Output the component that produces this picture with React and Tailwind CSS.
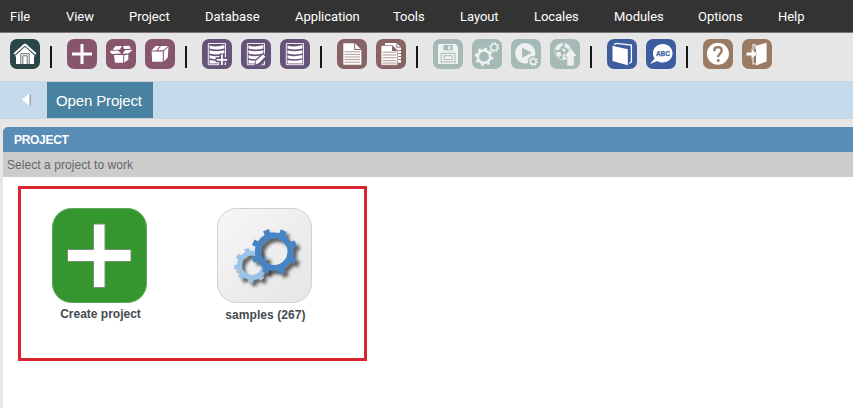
import React from "react";

const menus = [
  ["File", "w-[56px]"],
  ["View", "w-[63px]"],
  ["Project", "w-[76px]"],
  ["Database", "w-[90px]"],
  ["Application", "w-[98px]"],
  ["Tools", "w-[67px]"],
  ["Layout", "w-[74px]"],
  ["Locales", "w-[80px]"],
  ["Modules", "w-[84px]"],
  ["Options", "w-[80px]"],
  ["Help", "w-[60px]"],
];

// Closed gear outline with flat teeth, plus a circular hole (even-odd fill).
function gear(cx, cy, body, tip, hole, teeth, offset = 0, wide = 0.25, narrow = 0.19) {
  const step = (Math.PI * 2) / teeth;
  const at = (r, a) => `${(cx + r * Math.cos(a)).toFixed(2)} ${(cy + r * Math.sin(a)).toFixed(2)}`;
  let d = "";
  for (let i = 0; i < teeth; i++) {
    const a = i * step + offset;
    d += `${i ? `A${body} ${body} 0 0 1 ` : "M"}${at(body, a - step * wide)}`;
    d += `L${at(tip, a - step * narrow)}L${at(tip, a + step * narrow)}L${at(body, a + step * wide)}`;
  }
  d += `A${body} ${body} 0 0 1 ${at(body, -step * wide + offset)}Z`;
  d += `M${cx - hole} ${cy}a${hole} ${hole} 0 1 0 ${hole * 2} 0a${hole} ${hole} 0 1 0 ${-hole * 2} 0Z`;
  return d;
}

const Home = () => (
  <>
    <path d="M15 7.3 25.6 17.2H24V25H6V17.2H4.4Z" fill="#fff" />
    <path d="M15 5.2 25.8 15M15 5.2 4.2 15" stroke="#fff" strokeWidth="2" />
    <path d="M4.8 16.6 15 7.5 25.2 16.6" stroke="#2c4747" strokeWidth="0.8" fill="none" />
    <path d="M10.8 25V14.7H19.2V25M12.8 25V16.8H17.2V25" stroke="#526969" strokeWidth="0.9" fill="none" />
  </>
);

const Plus = () => <path d="M13.5 5h3v8.5H25v3h-8.5V25h-3v-8.5H5v-3h8.5Z" fill="#fff" />;

const OpenBox = () => (
  <g fill="#fff">
    <path d="M9.2 7.2 16 7 13.8 10.6 6.6 11Z" />
    <path d="M17 7 23.4 6.8 24.8 9.8 18 10Z" />
    <path d="M3.6 12 12 11.6 15.2 14.5 5.8 15Z" />
    <path d="M19 11.2 26.8 10.8 22.2 14.6 16.5 14.7Z" />
    <path d="M8 16H17.2V23.8H9Z" />
    <path d="M18.2 16.2 22.3 15.6V20.8L18.2 23.6Z" />
  </g>
);

const ClosedBox = () => (
  <g fill="#fff">
    <path d="M6.5 11.6 10.7 7H14.8L11.3 11.4Z" />
    <path d="M12.7 11.3 16.1 7H23L18.5 11.2Z" />
    <path d="M6.6 12.6H17.8V22.8H7.2Z" />
    <path d="M18.9 12.2 23.5 7.7 22.7 18.4 18.9 22.4Z" />
  </g>
);

const Sheet = () => (
  <>
    <path d="M6.3 4.5H23.5V25.7H6.3Z" fill="#66537a" stroke="#fff" strokeWidth="0.9" />
    <path d="M7.5 6.4Q14 8.6 22.4 6V9.6Q14 11.5 7.5 9.4ZM7.5 11.3Q14 13.3 22.4 11.2V14.6Q14 16.4 7.5 14.4ZM7.5 16.2Q14 18.2 22.4 16V19.3Q14 21.2 7.5 19.2ZM7.5 21Q14 22.8 22.4 20.6V24.5H7.5Z" fill="#fff" />
  </>
);

const SheetAdd = () => (
  <>
    <Sheet />
    <path d="M19.9 14.5V27M13.6 20.8H26" stroke="#66537a" strokeWidth="5" />
    <path d="M19.9 15.5V26M14.7 20.8H25.2" stroke="#fff" strokeWidth="1.8" />
  </>
);

const SheetEdit = () => (
  <>
    <Sheet />
    <path d="M13 27 15 20 22 13.8 27 18 20 26Z" fill="#66537a" />
    <path d="M14.4 25.5 15.3 21.5 22 15.6 24.4 17.5 18 24.1Z" fill="#fff" />
  </>
);

const Page = () => (
  <>
    <path d="M6.3 4.2H17.2V11H24.4V25.8H6.3Z" fill="#fff" />
    <path d="M18.2 4.6V10H23.8Z" fill="#fff" />
    <path d="M7.5 12.8H23M7.5 15.4H23M7.5 18H23M7.5 20.6H23M7.5 23.2H23" stroke="#a98b8c" strokeWidth="0.9" />
  </>
);

const Pages = () => (
  <>
    <path d="M9 4H20.5L25 8.2V23.8H9Z" fill="#fff" />
    <path d="M20.8 4.2V8.2H25" fill="none" stroke="#886365" strokeWidth="0.9" />
    <path d="M22.5 11.5H25M22.5 14.5H25M22.5 17.5H25M22.5 20.5H25" stroke="#886365" strokeWidth="0.9" />
    <path d="M5 6.5H16.8L21.7 11.4V26.2H5Z" fill="#fff" stroke="#886365" strokeWidth="0.7" />
    <path d="M16 6.5V12H21.7Z" fill="#886365" />
    <path d="M6.5 13.2H20.5M6.5 16H20.5M6.5 18.8H20.5M6.5 21.6H20.5M6.5 24H20.5" stroke="#a98b8c" strokeWidth="0.9" />
  </>
);

const Save = () => (
  <>
    <path d="M6 5H22.5L25 7.5V25H5V6Z" fill="#edf2f1" />
    <path d="M8.2 24.3V14.3H22V24.3M9 22.8H21.4" fill="none" stroke="#a5b9b6" strokeWidth="1" />
    <path d="M10.5 6H19.5V11.3H10.5Z" fill="#a5b9b6" />
    <path d="M15.2 7H17.4V10.4H15.2Z" fill="#edf2f1" />
    <path d="M11.2 16.7H19.2V20.5H11.2Z" fill="#edf2f1" stroke="#a5b9b6" strokeWidth="0.9" />
  </>
);

const Gears = () => (
  <g fill="#edf2f1" fillRule="evenodd">
    <path d={gear(12, 17.7, 7.4, 9.3, 4.9, 8, 0.2)} />
    <path d={gear(22.2, 8.3, 3.9, 5.2, 2.5, 8, 0.2)} />
  </g>
);

const Play = () => (
  <>
    <circle cx="14.2" cy="14.2" r="10.2" fill="#edf2f1" />
    <path d="M11.2 8.7 20.7 13.7 11.2 18.8Z" fill="#a5b9b6" />
    <circle cx="22.3" cy="22.5" r="5.5" fill="#a5b9b6" />
    <path d={gear(22.3, 22.5, 3.5, 4.7, 2.1, 8, 0.2)} fill="#edf2f1" fillRule="evenodd" />
  </>
);

const Publish = () => (
  <>
    <circle cx="13" cy="12.4" r="8.5" fill="#a5b9b6" stroke="#d9e3e1" strokeWidth="0.8" />
    <path d="M8 5.7 12 4.3 13.3 6.6 10.7 7.6 10.3 10 7.1 11.4 5 10.1ZM15.4 4.6 19 6.4 21.2 10.4 18.4 10.9 16.2 8.6 14 8.2ZM6.6 12.7 10.6 13.3 11.5 16.2 9.3 18.2 6.2 16.4ZM12.5 9.2 15.6 10.4 15.4 13.1 12.3 11.8ZM13 15.4 16.5 14.4V20.4L12.4 20.2Z" fill="#edf2f1" />
    <path d="M20.7 8.5 27.1 17.6H24.2V27H16.8V17.6H14.2Z" fill="#edf2f1" stroke="#a5b9b6" strokeWidth="0.8" />
  </>
);

const Book = () => (
  <>
    <path d="M5.5 6.7 20.8 10.3V26.3L5.5 22Z" fill="#fff" />
    <path d="M7 5.4 9.4 4.3 24.4 6V23L22.2 24.4" stroke="#fff" strokeWidth="1.3" fill="none" />
    <path d="M8.5 6.5 22.1 8.7V24" stroke="#3e5ca0" strokeWidth="1.1" fill="none" />
  </>
);

const Speech = () => (
  <>
    <path d="M16.8 5C22.3 5 26.5 9 26.5 14.2S22.3 23.5 16.8 23.5C14.7 23.5 13 23.1 11.3 22L4 25 8.6 19.5C7.4 18 7 16.2 7 14.2 7 9 11.2 5 16.8 5Z" fill="#fff" />
    <text x="16.9" y="17.2" textAnchor="middle" fill="#3e5ca0" fontFamily="Liberation Sans, Arial, sans-serif" fontWeight="700" fontSize="7" textLength="14" lengthAdjust="spacingAndGlyphs" stroke="#3e5ca0" strokeWidth="0.25">ABC</text>
  </>
);

const Question = () => (
  <>
    <circle cx="14.9" cy="14.8" r="11" fill="#fff" />
    <path d="M11.3 12.2V11.4C11.3 9.3 13 8.2 15 8.2S18.7 9.4 18.7 11.5C18.7 14.6 15.2 14.5 15.2 17.7V18.3" stroke="#9b7a63" strokeWidth="2.3" fill="none" />
    <path d="M13.9 20.2h2.6v2.7h-2.6Z" fill="#9b7a63" />
  </>
);

const Exit = () => (
  <>
    <path d="M10.2 5.1H14V10H12.6V7.5H11.8V24H14V25.4H10.2Z" fill="#dacbc1" />
    <path d="M14 6.8 24.6 3.7V22.6L14 26.5Z" fill="#fff" />
    <path d="M4.5 13.3H9.4V9.6L15 15 9.4 20.2V16.7H4.5Z" fill="#fff" stroke="#b29a8a" strokeWidth="0.6" />
  </>
);

const groups = [
  { tile: "bg-[#2b4646]", icons: [Home] },
  { tile: "bg-[#87566d]", icons: [Plus, OpenBox, ClosedBox] },
  { tile: "bg-[#66537a]", icons: [SheetAdd, SheetEdit, Sheet] },
  { tile: "bg-[#886365]", icons: [Page, Pages] },
  { tile: "bg-[#a5b9b6]", icons: [Save, Gears, Play, Publish] },
  { tile: "bg-[#3e5ca0]", icons: [Book, Speech] },
  { tile: "bg-[#9b7a63]", icons: [Question, Exit] },
];

function Toolbar() {
  return (
    <div className="flex h-12 items-start px-2.5 pt-1.5">
      {groups.map((g, i) => (
        <React.Fragment key={g.tile}>
          {i > 0 && <div className="mt-[7px] mr-[15px] ml-[10px] h-[22px] w-[2px] shrink-0 bg-[#181818]" />}
          <div className="flex gap-[9px]">
            {g.icons.map((Icon, k) => (
              <button key={k} className={`size-[30px] rounded-[7px] ${g.tile}`}>
                <svg viewBox="0 0 30 30" className="block size-[30px]" fill="none">
                  <Icon />
                </svg>
              </button>
            ))}
          </div>
        </React.Fragment>
      ))}
    </div>
  );
}

export default function App() {
  return (
    <div className="flex h-[408px] w-[853px] flex-col overflow-hidden bg-[#e6e6e6] font-['Liberation_Sans',Arial,sans-serif]">
      <nav className="flex h-[33px] shrink-0 items-center border-b border-[#777] bg-[#333] pt-[2px] pl-2.5 font-[Roboto,sans-serif] text-[13px] tracking-[-0.05px] text-white">
        {menus.map(([label, width]) => (
          <div key={label} className={`shrink-0 ${width}`}>{label}</div>
        ))}
      </nav>
      <Toolbar />
      <div className="flex h-[38px] shrink-0 border-y border-[#ccd3d8] bg-[#c4daea]">
        <div className="flex w-[47px] items-center pl-[21px]">
          <svg viewBox="0 0 11 16" className="h-4 w-[11px]">
            <path d="M9.7 2V14L2.5 8Z" fill="#8a9299" />
            <path d="M8.5 1.3V13.7L1 7.5Z" fill="#fff" />
          </svg>
        </div>
        <div className="flex w-[106px] items-center bg-[#4982a0] pt-[3px] pl-[9px] text-[15px] tracking-[-0.14px] text-white">
          <span className="whitespace-nowrap">Open Project</span>
        </div>
      </div>
      <main className="mt-2 ml-[3px] flex flex-1 flex-col overflow-hidden rounded-tl-[5px] bg-white">
        <h1 className="flex h-[25px] shrink-0 items-center bg-[#5a8db6] pl-[11px] text-xs font-bold tracking-[-0.3px] text-white">PROJECT</h1>
        <p className="flex h-[25px] shrink-0 items-center bg-[#ccc] pl-1 text-xs tracking-[0.06px] text-[#666]">Select a project to work</p>
        <section className="mt-[9px] ml-[15px] flex h-[175px] w-[349px] border-[3px] border-[#d9252f] pt-[19px] pl-[31px] text-xs font-bold text-[#444b51]">
          <div className="flex w-[95px] flex-col items-center">
            <svg viewBox="0 0 95 95" className="size-[95px] shrink-0">
              <rect x="0.5" y="0.5" width="94" height="94" rx="19" fill="#35962f" stroke="#60aa5c" />
              <path d="M41.5 16H53V41.5H79V53.5H53V79.5H41.5V53.5H15.5V41.5H41.5Z" fill="#fff" stroke="#769171" />
            </svg>
            <span className="mt-[3px] pl-[2px] whitespace-nowrap">Create project</span>
          </div>
          <div className="ml-[70px] flex w-[95px] flex-col items-center">
            <svg viewBox="0 0 95 95" className="size-[95px] shrink-0">
              <defs>
                <linearGradient id="tile" x1="0" y1="0" x2="1" y2="1">
                  <stop offset="0" stopColor="#f7f7f7" />
                  <stop offset="1" stopColor="#e5e5e5" />
                </linearGradient>
                <filter id="shadow" x="-30%" y="-30%" width="170%" height="170%">
                  <feDropShadow dx="3.5" dy="3.5" stdDeviation="1.8" floodColor="#333" floodOpacity="0.75" />
                </filter>
              </defs>
              <rect x="0.5" y="0.5" width="94" height="94" rx="19" fill="url(#tile)" stroke="#d0d0d0" />
              <g fillRule="evenodd" filter="url(#shadow)">
                <path d={gear(34.7, 57.3, 14.6, 17.6, 10, 9, 0.227)} fill="#9bc3e9" />
              </g>
              <g fillRule="evenodd" filter="url(#shadow)">
                <path d={gear(57.3, 43.7, 19.3, 23.3, 13.2, 8, 0.42, 0.2, 0.17)} fill="#4784c4" />
              </g>
            </svg>
            <span className="mt-1 pl-[2px] tracking-[0.08px] whitespace-nowrap">samples (267)</span>
          </div>
        </section>
      </main>
    </div>
  );
}
